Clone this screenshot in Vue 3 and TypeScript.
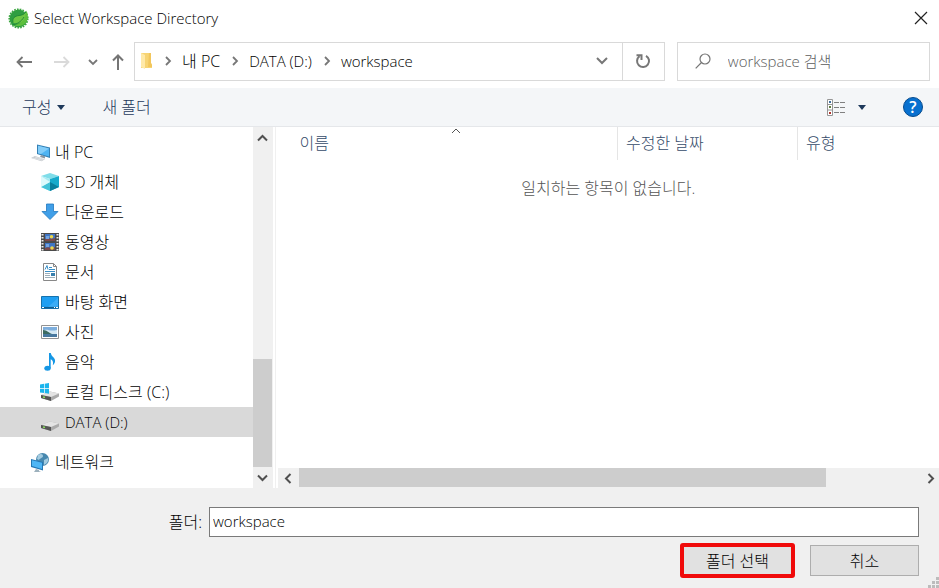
<script setup lang="ts">
import { ref } from 'vue'

interface Place {
  id: string
  label: string
  root?: boolean
}

const places: Place[] = [
  { id: 'pc', label: '내 PC', root: true },
  { id: 'cube', label: '3D 개체' },
  { id: 'download', label: '다운로드' },
  { id: 'video', label: '동영상' },
  { id: 'document', label: '문서' },
  { id: 'desktop', label: '바탕 화면' },
  { id: 'picture', label: '사진' },
  { id: 'music', label: '음악' },
  { id: 'system', label: '로컬 디스크 (C:)' },
  { id: 'drive', label: 'DATA (D:)' },
  { id: 'network', label: '네트워크', root: true },
]

const crumbs: string[] = ['내 PC', 'DATA (D:)', 'workspace']
const selected = ref('drive')
const folder = ref('workspace')
const query = ref('')

const isLatin = (text: string): boolean => /^[\x20-\x7e]+$/.test(text)
</script>

<template>
  <main class="dialog">
    <header class="titlebar">
      <svg class="logo" width="21" height="21" viewBox="0 0 21 21">
        <circle cx="10.500" cy="10.500" r="9" fill="#2f9e41" />
        <circle cx="10.500" cy="10.500" r="9.300" fill="none" stroke="#3ba63f" stroke-width="1.600" stroke-dasharray="1.600 1.200" />
        <path d="M18.500 2.500c2 5 2 9-1 12.500-4 4-9 3.500-12 2 6 0 11-4 13-14.500z" fill="#5cbf3c" />
        <path d="M5 14.500C4 10 7 8 11 7.500c3-.4 5-1 7-3.500 0 6-3 11-8 11.500-2 .2-3.500 0-5-1z" fill="#6cc644" />
        <path d="M4 17c5-1 9-3 12-8M5 14.500C4 10 7 8 11 7.500c3-.4 5-1 7-3.500" fill="none" stroke="#1d8436" stroke-width=".9" />
      </svg>
      <h1>Select Workspace Directory</h1>
      <button class="close" type="button" aria-label="닫기">
        <svg width="14" height="14" viewBox="0 0 14 14"><path d="M1 1l12 12M13 1L1 13" stroke="#222" stroke-width="1.200" /></svg>
      </button>
    </header>

    <nav class="navbar">
      <div class="history">
        <button type="button" aria-label="뒤로">
          <svg width="17" height="12" viewBox="0 0 17 12"><path d="M16 6H1.500M6.500 1l-5 5 5 5" fill="none" stroke="#757575" stroke-width="1.800" /></svg>
        </button>
        <button type="button" aria-label="앞으로" disabled>
          <svg width="17" height="12" viewBox="0 0 17 12"><path d="M1 6h14.500M10.500 1l5 5-5 5" fill="none" stroke="#dadada" stroke-width="1.800" /></svg>
        </button>
        <button class="recent" type="button" aria-label="최근 위치">
          <svg width="10" height="7" viewBox="0 0 10 7"><path d="M1 1l4 4 4-4" fill="none" stroke="#777" stroke-width="1.800" /></svg>
        </button>
        <button class="up" type="button" aria-label="위로">
          <svg width="12" height="16" viewBox="0 0 12 16"><path d="M6 16V1.500M1 6.500l5-5 5 5" fill="none" stroke="#757575" stroke-width="2" /></svg>
        </button>
      </div>
      <div class="address">
        <svg class="folder" width="13" height="18" viewBox="0 0 13 18">
          <path d="M1 1h8l2 1v9l1 1v4H1z" fill="#f7d474" />
          <path d="M1 1l4 2v14l-4-2z" fill="#ffe9a8" />
          <path d="M9 1h2v11l1 1v2H8z" fill="#f2c65c" />
        </svg>
        <template v-for="crumb in crumbs" :key="crumb">
          <svg class="chevron" width="7" height="10" viewBox="0 0 7 10"><path d="M1 1l4 4-4 4" fill="none" stroke="#777" stroke-width="1.800" /></svg>
          <a href="#" :class="{ latin: isLatin(crumb) }">{{ crumb }}</a>
        </template>
        <button class="expand" type="button" aria-label="이전 위치">
          <svg width="12" height="8" viewBox="0 0 12 8"><path d="M1 1l5 5 5-5" fill="none" stroke="#777" stroke-width="2" /></svg>
        </button>
        <button class="refresh" type="button" aria-label="새로 고침">
          <svg width="16" height="16" viewBox="0 0 16 16"><path d="M11 2.800A6 6 0 1 1 4.500 3.200M1.500 2.200h5V7" fill="none" stroke="#777" stroke-width="2" /></svg>
        </button>
      </div>
      <label class="search">
        <svg width="16" height="16" viewBox="0 0 16 16"><circle cx="10" cy="6" r="5" fill="none" stroke="#757575" stroke-width="1.200" /><path d="M6.500 9.500L.7 15.300" stroke="#757575" stroke-width="1.200" /></svg>
        <input v-model="query" type="search" placeholder="workspace 검색" aria-label="workspace 검색">
      </label>
    </nav>

    <div class="toolbar">
      <button type="button">
        구성
        <svg width="8" height="5" viewBox="0 0 8 5"><path d="M0 0h8L4 5z" fill="#1e395b" /></svg>
      </button>
      <button type="button">새 폴더</button>
      <button class="view" type="button" aria-label="보기 변경">
        <svg width="19" height="17" viewBox="0 0 19 17">
          <path d="M.5.5h5v16h-5zM.5 5.500h5M.5 11h5" fill="#fff" stroke="#969696" />
          <path d="M7 3.500h5M13 3.500h5M7 8.500h5M13 8.500h5M7 13.500h5M13 13.500h5" stroke="#808080" />
          <path d="M2 2h2v2H2z" fill="#3b6c9c" /><path d="M2 7h2v2H2z" fill="#5c7c3c" /><path d="M2 13h2v2H2z" fill="#b0352c" />
        </svg>
        <svg width="8" height="5" viewBox="0 0 8 5"><path d="M0 0h8L4 5z" fill="#1e395b" /></svg>
      </button>
      <button class="help" type="button" aria-label="도움말">?</button>
    </div>

    <div class="body">
      <ul class="places">
        <li v-for="place in places" :key="place.id">
          <button
            type="button"
            :class="['place', place.id, { root: place.root, selected: selected === place.id }]"
            @click="selected = place.id"
          >
            <svg width="20" height="20" viewBox="0 0 20 20">
              <g v-if="place.id === 'pc'">
                <path d="M7 2.500l13 3v10.500L7 12z" fill="#3480b4" />
                <path d="M8 3.800l11 2.600v8.200L8 11.200z" fill="#4fb4f2" />
                <path d="M8 3.800l11 2.600-8 5.700-3-.9z" fill="#83cdf9" />
                <path d="M11 13l4 1.300v2.200l-5-1.500z" fill="#8c98a2" />
                <path d="M1 16l4-2 10 3.200-3.500 2z" fill="#c3c8cc" />
                <path d="M3 16l9 2.300M5 15l8.500 2.400" stroke="#f2f4f5" stroke-width=".6" />
              </g>
              <g v-else-if="place.id === 'cube'">
                <path d="M10 1l9 3-9 3-9-3z" fill="#7fdde9" />
                <path d="M1 4l9 3v12l-9-4z" fill="#a5eaf1" />
                <path d="M19 4l-9 3v12l9-4z" fill="#16aacb" />
                <path d="M1 15l9-5v9z" fill="#43c3d8" /><path d="M10 10l9 5-9 4z" fill="#087f9d" />
                <path d="M1 4l9 6-9 5z" fill="#dcfafc" />
              </g>
              <path v-else-if="place.id === 'download'" d="M6.500 2h7v7.500h4.500l-8 8-8-8h4.500z" fill="#409fe8" stroke="#2179bf" stroke-width=".8" />
              <g v-else-if="place.id === 'video'">
                <path d="M1 1h18v18H1z" fill="#4a4a4a" />
                <path d="M2.500 2v17M17.500 2v17" stroke="#eee" stroke-width="2" stroke-dasharray="1.500 1.500" />
                <path d="M5 2h10v7H5zM5 11h10v7H5z" fill="#3f75c5" />
                <path d="M5 7c4-2 6 1 10-1v3H5zM5 16c4-2 6 1 10-1v3H5z" fill="#7c4a4c" />
                <circle cx="11.500" cy="4.700" r="1.800" fill="#ead64b" /><circle cx="12" cy="16" r="1.800" fill="#ead64b" />
                <path d="M6 4h3v3H6zM6 12h3v3H6z" fill="#73a4df" />
              </g>
              <g v-else-if="place.id === 'document'">
                <path d="M3.500 1.500h10l3 3v14h-13z" fill="#fff" stroke="#888" />
                <path d="M13.500 1.500v3h3" fill="none" stroke="#888" />
                <path d="M5 7.500L7 3.500l1 4M9 5.500h3M9 7.500h6M5 9.500h10" fill="none" stroke="#3a8fc7" />
                <path d="M5 11.500h5M5 13.500h5M5 15.500h10" stroke="#9eafba" /><path d="M11 11h4v3h-4z" fill="#377fad" />
              </g>
              <g v-else-if="place.id === 'desktop'">
                <path d="M1.500 4.500h17v12h-17z" fill="#1f9ff2" stroke="#1672ad" />
                <path d="M8 15L18 6v9z" fill="#3cadf7" /><path d="M1 15.500h18" stroke="#115d8f" stroke-width="1.200" />
                <path d="M2 15.500h2M14 15.500h1M16 15.500h2" stroke="#fff" />
              </g>
              <g v-else-if="place.id === 'picture'">
                <path d="M1.500 3.500h17v13h-17z" fill="#fff" stroke="#929292" />
                <path d="M3 5h14v10H3z" fill="#7daedd" /><path d="M3 9c4-3 6 1 14-1v4H3z" fill="#d3e8f4" />
                <path d="M3 8c4 0 6 3 9 4H3z" fill="#3d6b61" /><path d="M3 12h14v3H3z" fill="#48789e" />
              </g>
              <g v-else-if="place.id === 'music'" fill="#1597e5">
                <ellipse cx="7.500" cy="16.200" rx="3.200" ry="2.500" />
                <path d="M9 1h1.800c.4 4 5.200 4.500 4.200 9-.5 1.600-1.500 2.800-2.200 3.300.8-3.300-.2-5.300-2.100-6v9H9z" />
              </g>
              <g v-else-if="place.id === 'system' || place.id === 'drive'">
                <path d="M1 13l9-3.500 9 2v3l-8 4.500-10-3z" fill="#aaa" />
                <path d="M1 13l9-3.500 9 2-8 3.500z" fill="#e4e4e4" />
                <path d="M1 13l10 2v4L1 16z" fill="#555" /><path d="M3 15l2 .5" stroke="#88e05b" stroke-width="1.500" />
                <path v-if="place.id === 'system'" d="M0 2h9v9H0z" fill="#fff" />
                <path v-if="place.id === 'system'" d="M0 2.500l4-.7V6H0zM4.700 1.700L9 1v5H4.700zM0 6.700h4V11l-4-.6zM4.700 6.700H9v5l-4.300-.6z" fill="#1cb5ed" />
              </g>
              <g v-else>
                <circle cx="12.500" cy="7.500" r="6.500" fill="#4788af" />
                <path d="M8 3c3-2 5-1 5 1s-3 2-4 4l-2-1zM14 8l4-2c1 4-2 6-4 7z" fill="#a3cbe0" />
                <path d="M1 7l12 3v8.500L1 15z" fill="#2477b4" /><path d="M2 8.300l10 2.500v6.200l-10-3z" fill="#4eb6f5" />
                <path d="M6 17l3 1v1l2 1H4z" fill="#9db1bd" />
              </g>
            </svg>
            <span :class="{ latin: isLatin(place.label) }">{{ place.label }}</span>
          </button>
        </li>
      </ul>
      <div class="vscroll">
        <button type="button" aria-label="위로 스크롤">
          <svg width="11" height="8" viewBox="0 0 11 8"><path d="M1 6.500l4.500-4.500L10 6.500" fill="none" stroke="#505050" stroke-width="2" /></svg>
        </button>
        <div class="vtrack"><div class="vthumb"></div></div>
        <button type="button" aria-label="아래로 스크롤">
          <svg width="11" height="8" viewBox="0 0 11 8"><path d="M1 1.500L5.500 6 10 1.500" fill="none" stroke="#505050" stroke-width="2" /></svg>
        </button>
      </div>
      <section class="files">
        <table>
          <colgroup><col class="name"><col class="date"><col></colgroup>
          <thead>
            <tr>
              <th scope="col" aria-sort="ascending">
                이름
                <svg class="sort" width="10" height="6" viewBox="0 0 10 6"><path d="M1 5l4-4 4 4" fill="none" stroke="#555" /></svg>
              </th>
              <th scope="col">수정한 날짜</th>
              <th scope="col">유형</th>
            </tr>
          </thead>
          <tbody>
            <tr><td colspan="3">일치하는 항목이 없습니다.</td></tr>
          </tbody>
        </table>
        <div class="hscroll">
          <button type="button" aria-label="왼쪽으로 스크롤">
            <svg width="8" height="11" viewBox="0 0 8 11"><path d="M6.500 1L2 5.500 6.500 10" fill="none" stroke="#505050" stroke-width="2" /></svg>
          </button>
          <div class="htrack"><div class="hthumb"></div></div>
          <button class="right" type="button" aria-label="오른쪽으로 스크롤">
            <svg width="8" height="11" viewBox="0 0 8 11"><path d="M1.500 1L6 5.500 1.500 10" fill="none" stroke="#505050" stroke-width="2" /></svg>
          </button>
        </div>
      </section>
    </div>

    <form class="footer" @submit.prevent>
      <div class="field">
        <label for="folder">폴더:</label>
        <input id="folder" v-model="folder" class="latin" type="text">
      </div>
      <div class="actions">
        <button class="primary" type="submit">폴더 선택</button>
        <button class="cancel" type="button">취소</button>
      </div>
      <svg class="grip" width="11" height="11" viewBox="0 0 11 11"><path d="M8 0h3v3H8zM4 4h3v3H4zM8 4h3v3H8zM0 8h3v3H0zM4 8h3v3H4zM8 8h3v3H8z" fill="#bcbcbc" /></svg>
    </form>
  </main>
</template>

<style>
body {
  margin: 0;
}
</style>

<style scoped>
* {
  box-sizing: border-box;
}

.dialog {
  display: flex;
  flex-direction: column;
  min-height: 100vh;
  background: #fff;
  color: #000;
  font-family: "Open Sans", "Noto Sans CJK KR", sans-serif;
  font-size: 16px;
  font-weight: 300;
  line-height: 24px;
}

button,
input {
  padding: 0;
  border: 0;
  border-radius: 0;
  background: none;
  color: inherit;
  font: inherit;
}

svg {
  display: block;
  flex: none;
}

.titlebar {
  display: flex;
  align-items: center;
  height: 36px;
  padding: 0 11px 0 8px;
  gap: 5px;
}

.titlebar h1 {
  flex: 1;
  margin: 0;
  font-size: 15px;
  font-weight: inherit;
}

.latin {
  font-size: 15px;
}

.navbar {
  display: flex;
  align-items: center;
  height: 52px;
  padding: 0 9px 2px 16px;
}

.history {
  display: flex;
  align-items: center;
  width: 118px;
  padding-top: 2px;
  gap: 20px;
}

.history .recent {
  margin-left: -2px;
}

.history .up {
  margin-left: -6px;
}

.address {
  display: flex;
  flex: 1;
  align-items: center;
  height: 39px;
  padding-left: 5px;
  border: 1px solid #d9d9d9;
}

.address a {
  color: inherit;
  text-decoration: none;
}

.chevron {
  margin: 0 10px 0 12px;
}

.expand {
  display: grid;
  place-items: center;
  width: 40px;
  height: 37px;
  margin-left: auto;
}

.refresh {
  display: grid;
  place-items: center;
  width: 42px;
  height: 37px;
  border-left: 1px solid #d9d9d9;
}

.search {
  display: flex;
  align-items: center;
  width: 27.700%;
  height: 39px;
  margin-left: 12px;
  padding-left: 17px;
  gap: 17px;
  border: 1px solid #d9d9d9;
}

.search input {
  flex: 1;
  min-width: 0;
  outline: 0;
  font-size: 15px;
}

.search input::placeholder {
  color: #5c5c5c;
  opacity: 1;
}

.toolbar {
  display: flex;
  align-items: center;
  height: 39px;
  padding: 0 16px 0 22px;
  gap: 37px;
  border-bottom: 1px solid #e5e7ea;
  background: #f4f6f8;
  color: #1e395b;
}

.toolbar button {
  display: flex;
  align-items: center;
  gap: 6px;
}

.toolbar .view {
  gap: 12px;
  margin-left: auto;
}

.toolbar .help {
  justify-content: center;
  width: 20px;
  height: 20px;
  border: 1px solid #064b8d;
  border-radius: 50%;
  background: #0870cf;
  color: #fff;
  font-weight: 600;
}

.body {
  display: flex;
  flex: 1;
}

.places {
  width: 26.900%;
  margin: 0;
  padding: 10px 0 11px;
  list-style: none;
}

.place {
  display: flex;
  align-items: center;
  width: 100%;
  height: 30px;
  padding-left: 40px;
  gap: 5px;
  text-align: left;
}

.place.root {
  padding-left: 30px;
}

.place.selected {
  background: #d9d9d9;
}

.place.network {
  margin-top: 10px;
}

.vscroll {
  display: flex;
  flex-direction: column;
  width: 20px;
  background: #f0f0f0;
}

.vscroll button {
  display: grid;
  place-items: center;
  width: 20px;
  height: 21px;
}

.vtrack {
  display: flex;
  flex: 1;
  flex-direction: column;
  justify-content: flex-end;
}

.vthumb {
  width: 19px;
  height: 34%;
  background: #cdcdcd;
}

.files {
  display: flex;
  flex: 1;
  flex-direction: column;
  min-width: 0;
  margin-left: 2px;
  padding-left: 2px;
  border-left: 1px solid #f0f0f0;
}

table {
  width: 100%;
  border-collapse: collapse;
  table-layout: fixed;
}

.name {
  width: 51.400%;
}

.date {
  width: 27.200%;
}

th {
  position: relative;
  height: 33px;
  padding: 0 0 2px 8px;
  color: #354b69;
  font-weight: inherit;
  text-align: left;
}

th:first-child {
  padding-left: 22px;
}

th + th {
  border-left: 1px solid #e5e5e5;
}

.sort {
  position: absolute;
  top: 1px;
  left: 51%;
}

td {
  height: 56px;
  padding: 0;
  color: #555;
  text-align: center;
}

.hscroll {
  display: flex;
  height: 20px;
  margin-top: auto;
  background: #f0f0f0;
}

.hscroll button {
  display: grid;
  place-items: center;
  width: 21px;
  height: 20px;
}

.hscroll .right {
  width: 16px;
}

.htrack {
  flex: 1;
}

.hthumb {
  width: 84.500%;
  height: 19px;
  background: #cdcdcd;
}

.footer {
  position: relative;
  padding: 19px 20px 10px;
  background: #f0f0f0;
}

.field {
  display: flex;
  align-items: center;
}

.field label {
  width: 189px;
  padding-right: 7px;
  text-align: right;
}

.field input {
  flex: 1;
  min-width: 0;
  height: 30px;
  padding: 0 3px 2px;
  border: 1px solid #7a7a7a;
  background: #fff;
}

.actions {
  display: flex;
  align-items: center;
  justify-content: flex-end;
  margin-top: 6px;
  gap: 15px;
}

.actions button {
  background: #e1e1e1;
}

.actions .primary {
  width: 115px;
  height: 35px;
  border: 4px solid #f00a0a;
  border-radius: 3px;
}

.actions .cancel {
  width: 109px;
  height: 31px;
  border: 1px solid #adadad;
}

.grip {
  position: absolute;
  right: 0;
  bottom: 0;
}
</style>
